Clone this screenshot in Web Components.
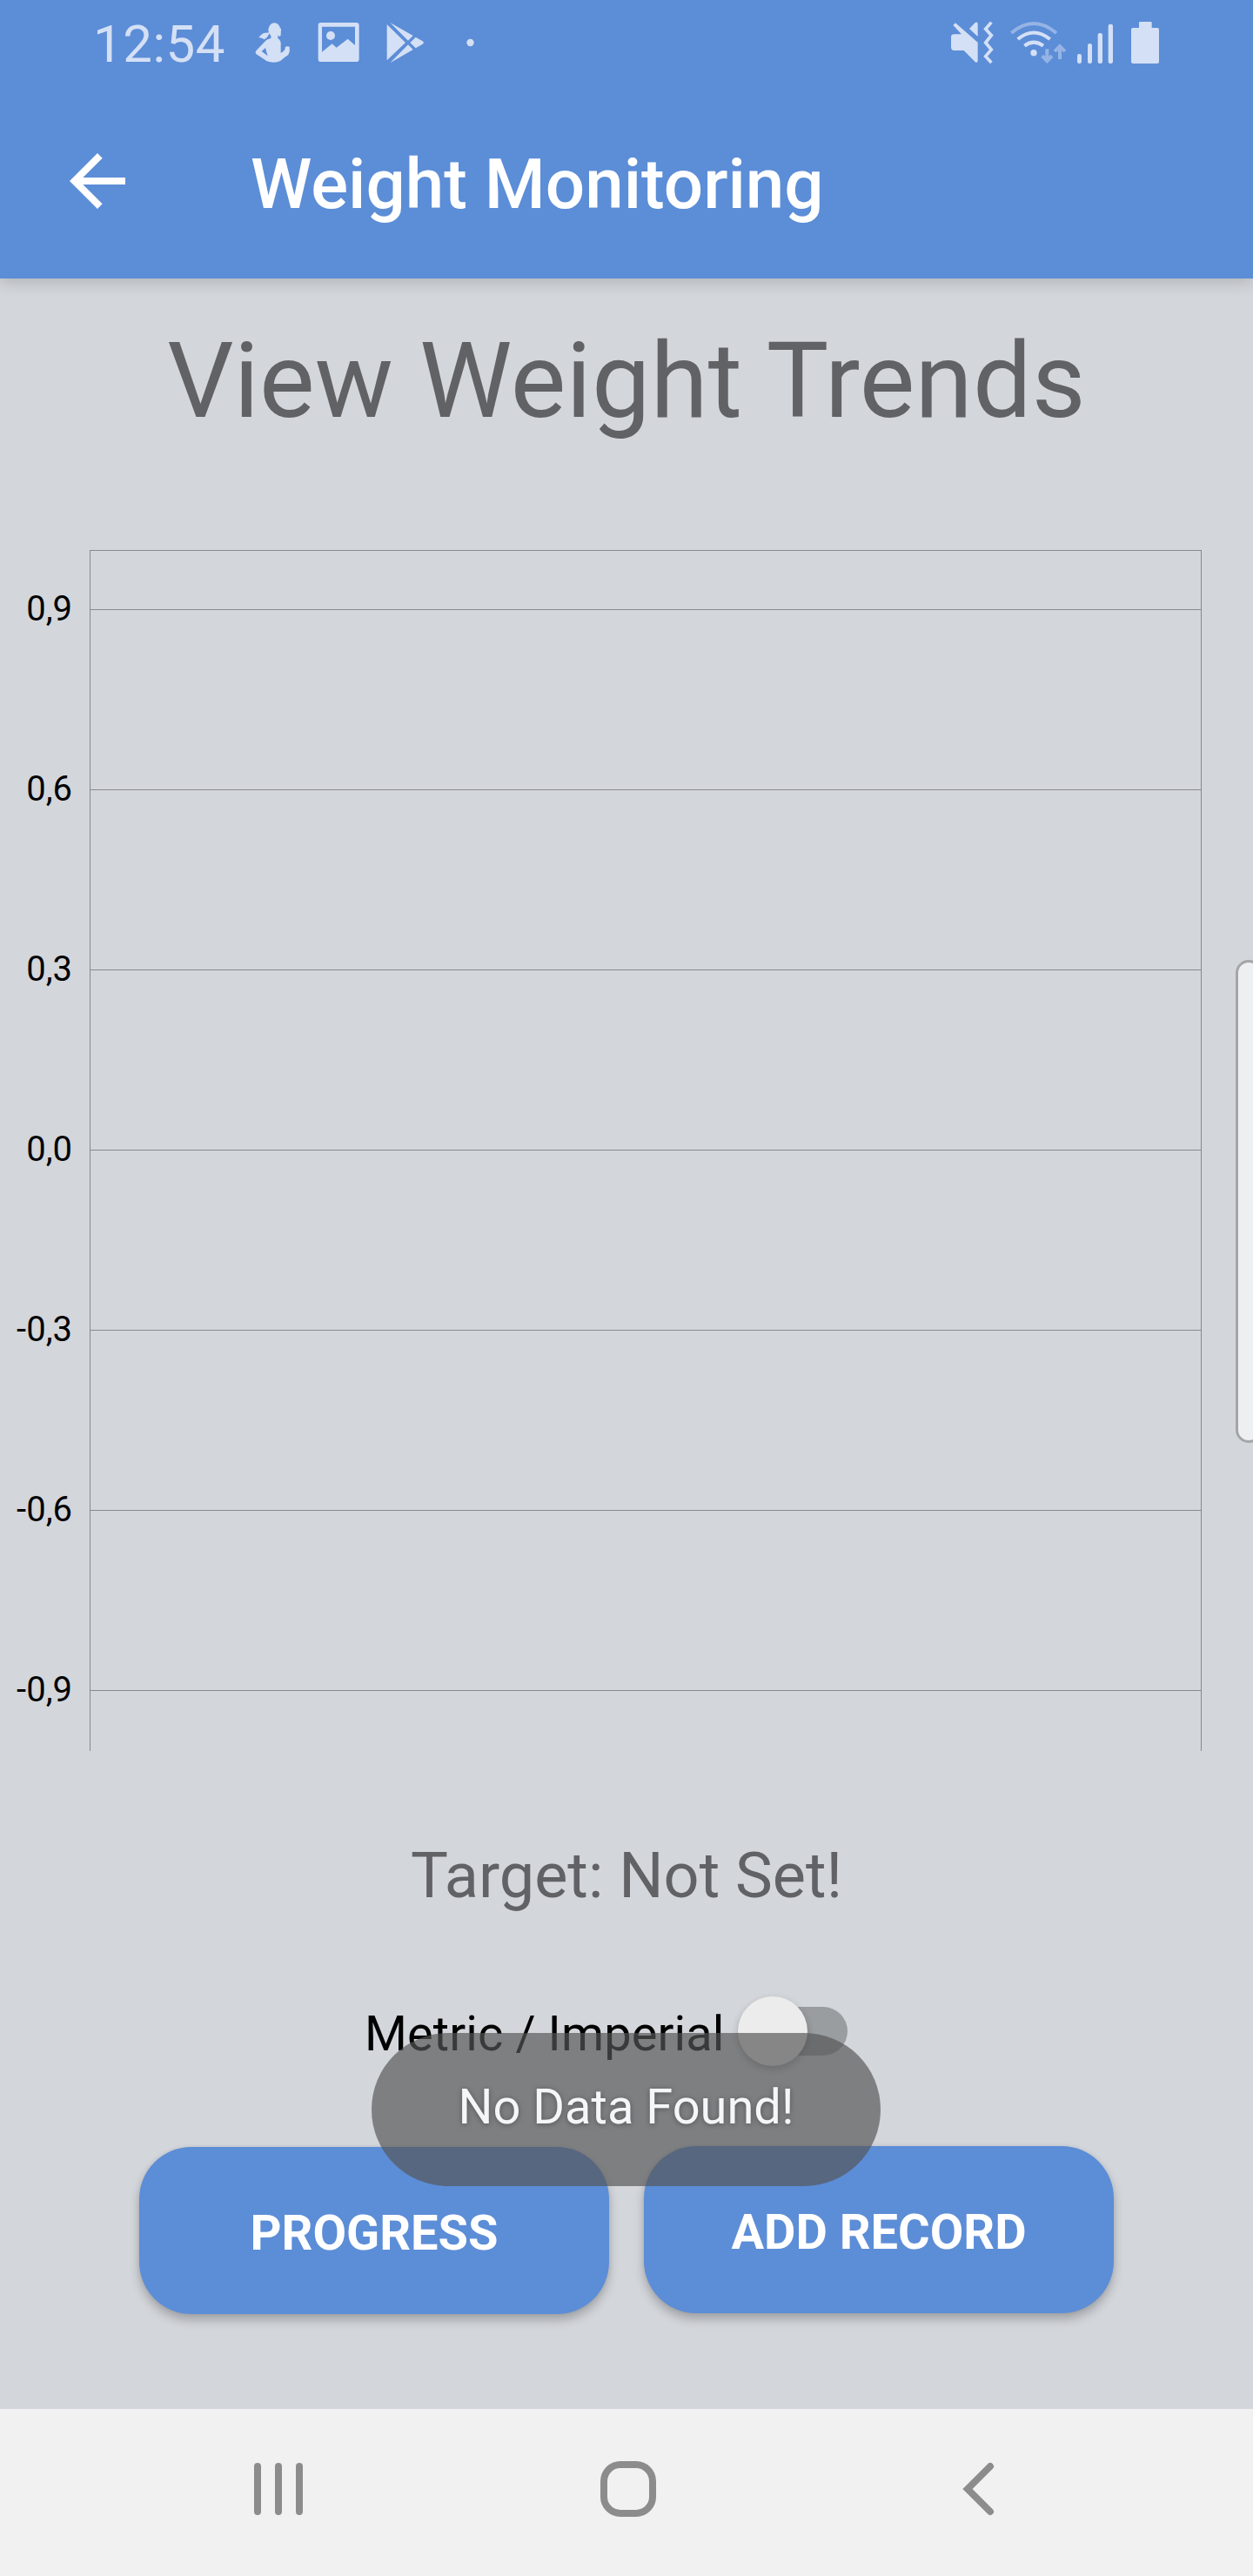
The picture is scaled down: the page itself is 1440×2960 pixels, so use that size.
<!DOCTYPE html>
<html lang="en">
<head>
<meta charset="utf-8">
<title>Weight Monitoring</title>
<style>
html,body{margin:0;padding:0}
body{width:1440px;height:2960px;overflow:hidden;background:#d3d6db;font-family:Roboto,sans-serif}
</style>
</head>
<body>
<weight-screen></weight-screen>
<script>
const define = (name, html, setup) => customElements.define(name, class extends HTMLElement {
  constructor() {
    super();
    const t = document.createElement('template');
    t.innerHTML = html;
    this.attachShadow({mode: 'open'}).appendChild(t.content.cloneNode(true));
  }
  connectedCallback() { if (setup) setup(this, this.shadowRoot); }
});

define('status-bar', `
<style>
:host{display:flex;height:96px;box-sizing:border-box;padding:0 107px;color:#d4e0f5;align-items:flex-start;justify-content:space-between}
.g{display:flex;align-items:flex-start}
.clock{font-size:60px;line-height:70px;padding-top:16px;width:185px;white-space:nowrap;letter-spacing:.5px}
svg{display:block;height:50px;margin-top:24px;fill:currentColor;flex:none}
</style>
<div class="g">
 <div class="clock">12:54</div>
 <svg style="width:44px" viewBox="606 72 132 150"><ellipse cx="676" cy="103" rx="21" ry="24"/><path d="M690 96L699 98L698 123L690 126ZM664 117H688V132Q700 139 698 157V183Q708 180 713 169V163Q719 158 728 161Q731 176 724 189Q709 198 697 210Q676 220 650 211L613 186Q608 181 613 175L649 137L664 132ZM632 177L653 193Q649 180 645 165Z" fill-rule="evenodd"/><path d="M622 129Q628 120 639 114L660 112Q654 129 641 136Q637 132 622 129Z"/></svg>
 <svg style="width:50px;margin-left:28px" viewBox="822 72 150 150"><path fill-rule="evenodd" d="M836 78H958Q968 78 968 88V203Q968 213 958 213H836Q827 213 827 203V88Q827 78 836 78ZM840 92V179L875 151L890 164L929 134L954 156V92Z"/><circle cx="870" cy="123" r="15"/></svg>
 <svg style="width:45px;margin-left:29px" viewBox="1059 72 135 150"><path d="M1064 84L1128 147L1064 208ZM1075 78L1154 123L1137 140ZM1163 128L1187 142Q1194 147 1187 152L1163 166L1144 147ZM1137 154L1154 171L1075 217Z"/></svg>
 <svg style="width:9px;margin-left:48px" viewBox="1339 72 27 150"><circle cx="1352.500" cy="147" r="12.500"/></svg>
</div>
<div class="g">
 <svg style="width:50px" viewBox="66 72 150 150"><path d="M76 87L84 79L161 146V210Q161 217 154 215L113 174H80Q69 174 69 163V128Q69 118 80 118H105ZM132 99L152 78Q161 74 161 82V126Z"/><path d="M208 77L188 100L208 122L188 147L208 171L188 194L208 216" fill="none" stroke="currentColor" stroke-width="11"/></svg>
 <svg style="width:66px;margin-left:18px" viewBox="270 72 198 150"><g fill="none" stroke="currentColor" stroke-width="12"><path d="M277 114Q354 48 432 114" opacity=".48"/><path d="M299 135Q354 90 410 135M322 158Q354 134 387 158"/></g><circle cx="354" cy="182" r="11"/><path opacity=".48" d="M394 169H406V194L413 188L421 197L400 219L379 197L387 188L394 194ZM444 151L466 173L458 181L450 175V204H438V175L430 181L422 173Z"/></svg>
 <svg style="width:43px;margin-left:11px" viewBox="501 72 129 150"><rect x="504" y="186" width="15" height="33" rx="7"/><rect x="540" y="150" width="15" height="69" rx="7"/><rect x="575" y="114" width="16" height="105" rx="7"/><rect x="611" y="83" width="16" height="136" rx="7"/></svg>
 <svg style="width:34px;margin-left:19px" viewBox="687 72 102 150"><path d="M720 75H758Q761 75 761 79V96H780Q786 96 786 102V213Q786 219 780 219H696Q690 219 690 213V102Q690 96 696 96H717V79Q717 75 720 75Z"/></svg>
</div>`);

define('app-bar', `
<style>
:host{display:block;position:relative;height:320px;flex:none;background:#5c8dd7;color:#fff;box-shadow:0 5px 16px rgba(0,0,0,.16)}
.row{display:flex;height:224px;align-items:center;box-sizing:border-box;padding-left:64px}
svg{width:96px;height:96px;fill:currentColor}
.title{font-size:80px;font-weight:500;line-height:94px;margin-left:128px;padding-top:7px;white-space:nowrap}
</style>
<status-bar></status-bar>
<div class="row"><svg viewBox="0 0 24 24"><path d="M20 11H7.830l5.590-5.590L12 4l-8 8 8 8 1.410-1.410L7.830 13H20v-2z"/></svg><div class="title"><slot></slot></div></div>`);

define('trend-chart', `
<style>
:host{display:flex;height:1380px;color:#000}
.labels{width:83px;margin-top:-36px;flex:none}
.labels div{height:207px;line-height:207px;font-size:40px;text-align:right;white-space:nowrap}
.plot{margin-left:20px;width:1278px;box-sizing:border-box;border:1px solid #888a8e;border-bottom:0;padding-top:67px;display:flex;flex-direction:column;overflow:hidden}
.plot div{height:207px;flex:none;box-sizing:border-box;border-top:1px solid #888a8e}
</style>
<div class="labels"></div><div class="plot"></div>`, (host, root) => {
  const [labels, plot] = root.querySelectorAll('div');
  for (const v of host.getAttribute('ticks').split(' ')) {
    const l = document.createElement('div');
    l.textContent = v;
    labels.appendChild(l);
    plot.appendChild(document.createElement('div'));
  }
});

define('unit-switch', `
<style>
:host{display:flex;height:80px;align-items:center;color:#000;font-size:56px;line-height:66px}
.label{padding-top:6px;width:429px;white-space:nowrap;letter-spacing:.1px}
.track{width:114px;height:56px;border-radius:28px;background:#9a9da0;margin-left:12px;display:flex;align-items:center}
.thumb{width:80px;height:80px;border-radius:50%;background:#ececec;margin-left:-12px;flex:none;box-shadow:0 4px 8px rgba(0,0,0,.25)}
</style>
<div class="label"><slot></slot></div><div class="track"><div class="thumb"></div></div>`);

define('action-button', `
<style>
:host{display:flex;width:540px;height:192px;box-sizing:border-box;padding-top:6px;border-radius:60px;background:#5c8dd7;color:#fff;font-size:56px;line-height:66px;font-weight:700;align-items:center;justify-content:center;box-shadow:0 7px 12px rgba(0,0,0,.24),0 0 5px rgba(0,0,0,.06);white-space:nowrap}
</style><slot></slot>`);

define('toast-message', `
<style>
:host{display:flex;width:585px;height:176px;box-sizing:border-box;padding-bottom:6px;border-radius:88px;background:rgba(86,86,86,.68);color:#f5f6f8;font-size:56px;line-height:66px;align-items:center;justify-content:center;white-space:nowrap;text-shadow:0 1px 6px rgba(0,0,0,.35)}
</style><slot></slot>`);

define('edge-handle', `
<style>:host{display:block;width:30px;height:555px;box-sizing:border-box;border:3px solid #a4a5a7;border-radius:20px;background:#eeeff1}</style>`);

define('nav-bar', `
<style>
:host{display:flex;height:192px;flex:none;background:#f1f1f1;color:#8c8c8c;align-items:center;box-sizing:border-box;padding:0 0 8px 288px}
svg{width:64px;height:64px;fill:none;stroke:currentColor;stroke-width:8;display:block;flex:none}
</style>
<svg viewBox="0 0 64 64" stroke-linecap="round"><path d="M8 6V58M32 6V58M56 6V58"/></svg>
<svg viewBox="0 0 64 64" style="margin-left:338px"><rect x="4" y="4" width="56" height="56" rx="19"/></svg>
<svg viewBox="0 0 64 64" style="margin-left:338px" stroke-linecap="round"><path d="M46 6L20 32L46 58"/></svg>`);

define('weight-screen', `
<style>
:host{display:flex;flex-direction:column;position:relative;width:1440px;height:2960px;overflow:hidden;background:#d3d6db}
main{flex:1;min-height:0;display:flex;flex-direction:column}
h1{margin:0;height:312px;box-sizing:border-box;padding-top:48px;font-size:120px;line-height:140px;font-weight:400;color:#616266;text-align:center;white-space:nowrap;letter-spacing:.15px}
.target{margin-top:102px;font-size:72px;line-height:84px;color:#616266;text-align:center;white-space:nowrap}
unit-switch{margin:96px 0 0 419px}
.actions{display:flex;gap:40px;margin-top:92px;justify-content:center}
.actions action-button:first-child{margin-top:1px}
toast-message{position:absolute;left:427px;top:2336px}
edge-handle{position:absolute;left:1420px;top:1103px}
</style>
<app-bar>Weight Monitoring</app-bar>
<main>
 <h1>View Weight Trends</h1>
 <trend-chart ticks="0,9 0,6 0,3 0,0 -0,3 -0,6 -0,9"></trend-chart>
 <div class="target">Target: Not Set!</div>
 <unit-switch>Metric / Imperial</unit-switch>
 <div class="actions"><action-button>PROGRESS</action-button><action-button>ADD RECORD</action-button></div>
</main>
<nav-bar></nav-bar>
<edge-handle></edge-handle>
<toast-message>No Data Found!</toast-message>`);
</script>
</body>
</html>
